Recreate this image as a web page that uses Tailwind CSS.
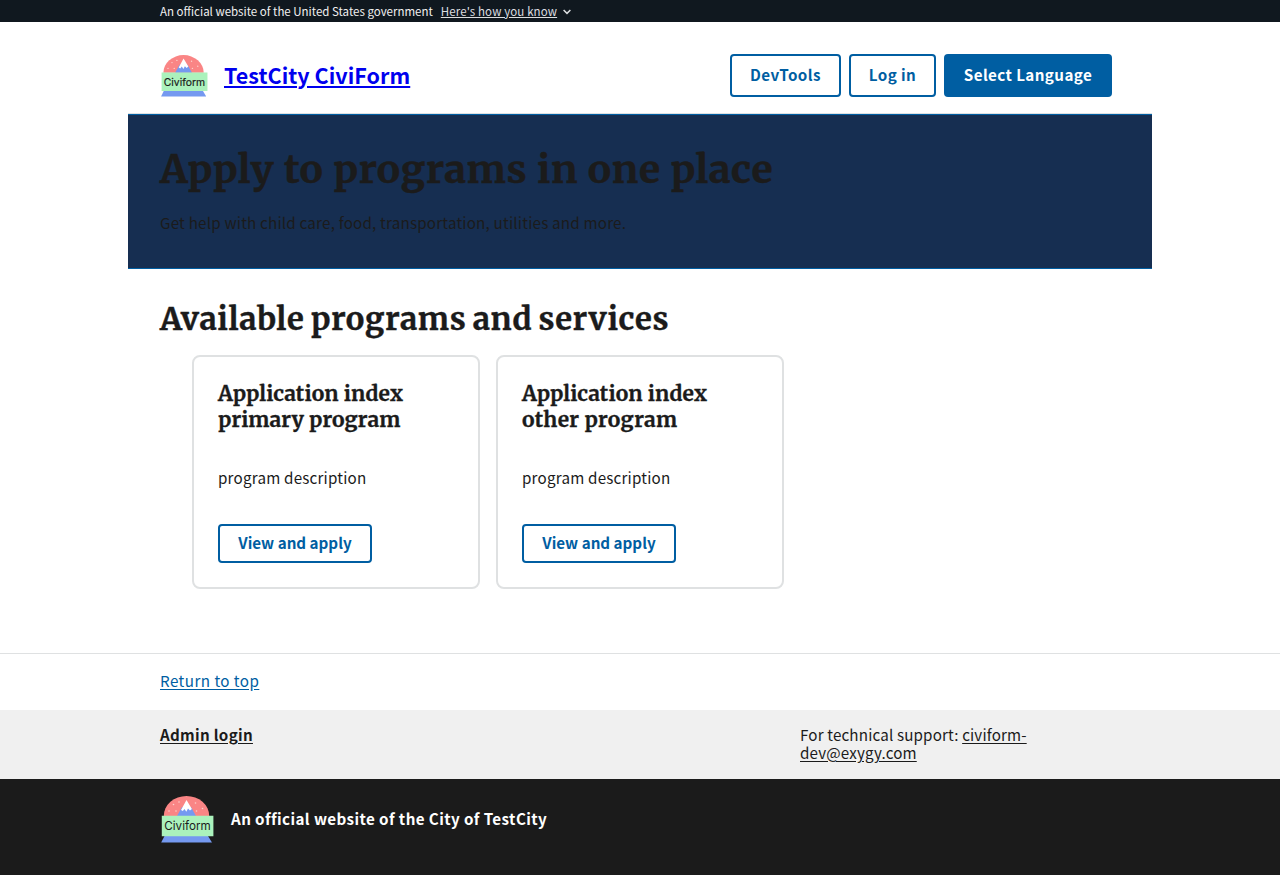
<!DOCTYPE html>
<html lang="en">
<head>
<meta charset="utf-8">
<title>TestCity CiviForm</title>
<script src="https://cdn.jsdelivr.net/npm/@tailwindcss/browser@4"></script>
</head>
<body class="bg-white text-[#1b1b1b] font-['Source_Sans_Pro','Noto_Sans_CJK_SC',sans-serif] text-[15.2px] leading-[18px]">

<section class="h-[22px] bg-[#10181f]">
  <div class="mx-auto flex h-full w-[1024px] items-center px-8 text-[11.5px] leading-4 text-[#f0f0f0]">
    <p class="pb-px">An official website of the United States government</p>
    <button class="ml-2 flex items-center pb-px">
      <span class="tracking-[0.12px] text-[#dcdee0] underline">Here's how you know</span>
      <svg class="mt-0.5 ml-1.5 size-2" viewBox="0 0 8 8" fill="none" stroke="#dcdee0" stroke-width="1.500"><path d="M.6 2 4 5.400 7.400 2"/></svg>
    </button>
  </div>
</section>

<header class="mx-auto flex h-[92px] w-[1024px] items-start justify-between border-b border-[#dfe1e2] px-8 pt-8">
  <div class="flex items-center">
    <svg class="h-[43px] w-12" viewBox="0 0 54 48">
      <path d="M3.800 21A22.700 20 0 0 1 49.200 21Z" fill="#fa8585"/>
      <g fill="#fbd0cc"><circle cx="9" cy="16" r=".8"/><circle cx="16" cy="16" r=".8"/><circle cx="13.500" cy="9.500" r=".8"/><circle cx="19" cy="7" r=".8"/><circle cx="35.500" cy="8" r=".8"/><circle cx="36.500" cy="16" r=".8"/><circle cx="42.500" cy="13.500" r=".8"/></g>
      <path d="M17 21 22 12h9L36 21Z" fill="#7599f0"/>
      <path d="M26.500 5 21 15l1.800 1 1.700-2 1.800 2.700L28 13.500l2 2 1.900-1.500Z" fill="#fff"/>
      <path d="M4.500 41H48l4 6.500H1.200Z" fill="#7599f0"/>
      <path d="M1.800 20.700h51.600v20.600H1.800Z" fill="#abf2bc"/>
      <text x="27.500" y="35.400" text-anchor="middle" textLength="46.500" lengthAdjust="spacingAndGlyphs" font-family="Inter, sans-serif" font-size="12" stroke="#1b1b1b" stroke-width=".2" fill="#1b1b1b">Civiform</text>
    </svg>
    <a href="#" class="ml-4 -mt-0.5 text-[21.5px] leading-[26px] font-bold tracking-[0.04px] text-[#0000ee] underline underline-offset-2">TestCity CiviForm</a>
  </div>
  <nav class="mr-2 flex gap-2 font-bold tracking-[0.4px] text-[#005ea2]">
    <button class="h-[43px] w-[111px] rounded-[4px] border-2 border-[#005ea2] pb-[3px]">DevTools</button>
    <button class="h-[43px] w-[87px] rounded-[4px] border-2 border-[#005ea2] pb-[3px]">Log in</button>
    <button class="h-[43px] w-[168px] rounded-[4px] bg-[#005ea2] pb-[3px] text-white">Select Language</button>
  </nav>
</header>

<main>
  <section class="mx-auto h-[155px] w-[1024px] border-y border-[#005ea2] bg-[#162e51] px-8 pt-8">
    <h1 class="font-['Merriweather','Noto_Serif',serif] text-[39px] leading-[46px] font-bold tracking-[0.62px] [-webkit-text-stroke:0.5px_#1b1b1b]">Apply to programs in one place</h1>
    <p class="mt-5 tracking-[0.2px]">Get help with child care, food, transportation, utilities and more.</p>
  </section>

  <section class="mx-auto w-[1024px] px-8 pt-[31px]">
    <h2 class="font-['Merriweather','Noto_Serif',serif] text-[31px] leading-[38px] font-bold tracking-[0.66px] [word-spacing:-1.6px] [-webkit-text-stroke:0.4px_#1b1b1b]">Available programs and services</h2>
    <ul class="mt-[17px] ml-8 flex gap-4">
      <li class="h-[234px] w-72 rounded-lg border-2 border-[#dfe1e2] px-6 pt-6">
        <h3 class="font-['Merriweather','Noto_Serif',serif] text-[21px] leading-[26px] font-bold tracking-[0.12px] [-webkit-text-stroke:0.3px_#1b1b1b]">Application index<br><span class="tracking-[0.05px]">primary program</span></h3>
        <p class="mt-[35px] tracking-[0.2px]">program description</p>
        <button class="mt-[38px] h-[39px] w-[154px] rounded-[4px] border-2 border-[#005ea2] pb-[3px] font-bold text-[#005ea2]">View and apply</button>
      </li>
      <li class="h-[234px] w-72 rounded-lg border-2 border-[#dfe1e2] px-6 pt-6">
        <h3 class="font-['Merriweather','Noto_Serif',serif] text-[21px] leading-[26px] font-bold tracking-[0.12px] [-webkit-text-stroke:0.3px_#1b1b1b]">Application index<br><span class="tracking-[0.27px]">other program</span></h3>
        <p class="mt-[35px] tracking-[0.2px]">program description</p>
        <button class="mt-[38px] h-[39px] w-[154px] rounded-[4px] border-2 border-[#005ea2] pb-[3px] font-bold text-[#005ea2]">View and apply</button>
      </li>
    </ul>
  </section>
</main>

<footer class="mt-16 border-t border-[#dfe1e2]">
  <div class="mx-auto h-14 w-[1024px] px-8 pt-[17px]"><a href="#" class="tracking-[0.45px] text-[#005ea2] underline underline-offset-2">Return to top</a></div>
  <div class="h-[69px] bg-[#f0f0f0]">
    <div class="mx-auto grid w-[1024px] grid-cols-2 px-8 pt-[15px]">
      <a href="#" class="font-bold tracking-[0.3px] underline underline-offset-2">Admin login</a>
      <p class="ml-40 w-60 tracking-[0.15px]">For technical support: <a href="#" class="underline underline-offset-2">civiform-<br>dev@exygy.com</a></p>
    </div>
  </div>
  <div class="h-24 bg-[#1b1b1b] text-white">
    <div class="mx-auto flex w-[1024px] items-center px-8 pt-4">
      <svg class="h-12 w-[54px]" viewBox="0 0 54 48">
        <path d="M3.800 21A22.700 20 0 0 1 49.200 21Z" fill="#fa8585"/>
        <g fill="#fbd0cc"><circle cx="9" cy="16" r=".8"/><circle cx="16" cy="16" r=".8"/><circle cx="13.500" cy="9.500" r=".8"/><circle cx="19" cy="7" r=".8"/><circle cx="35.500" cy="8" r=".8"/><circle cx="36.500" cy="16" r=".8"/><circle cx="42.500" cy="13.500" r=".8"/></g>
        <path d="M17 21 22 12h9L36 21Z" fill="#7599f0"/>
        <path d="M26.500 5 21 15l1.800 1 1.700-2 1.800 2.700L28 13.500l2 2 1.900-1.500Z" fill="#fff"/>
        <path d="M4.500 41H48l4 6.500H1.200Z" fill="#7599f0"/>
        <path d="M1.800 20.700h51.600v20.600H1.800Z" fill="#abf2bc"/>
        <text x="27.500" y="35.400" text-anchor="middle" textLength="46.500" lengthAdjust="spacingAndGlyphs" font-family="Inter, sans-serif" font-size="12" fill="#1b1b1b">Civiform</text>
      </svg>
      <p class="-mt-0.5 ml-[17px] font-bold tracking-[0.4px]">An official website of the City of TestCity</p>
    </div>
  </div>
</footer>
</body>
</html>
